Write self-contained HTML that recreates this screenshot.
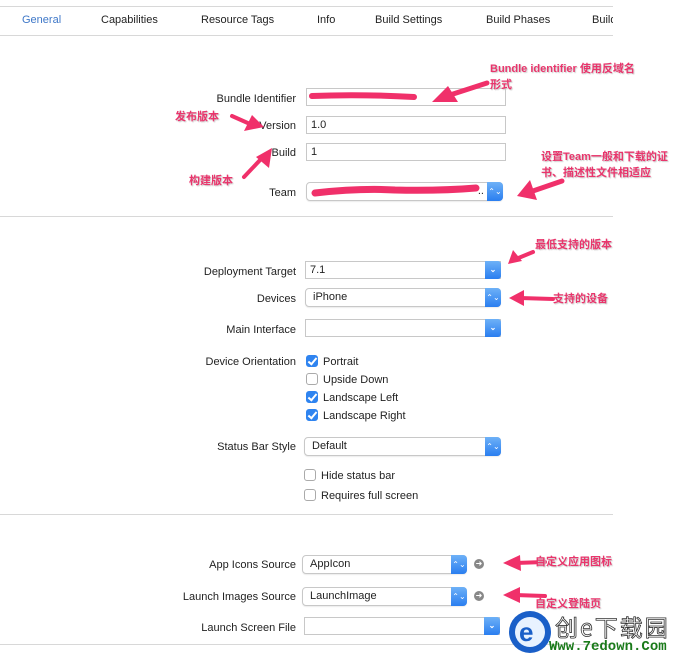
<!DOCTYPE html>
<html><head><meta charset="utf-8"><style>
*{margin:0;padding:0;box-sizing:border-box}
body{width:687px;height:661px;background:#fff;position:relative;overflow:hidden;font-family:"Liberation Sans","Noto Sans CJK SC",sans-serif;font-size:11px;color:#222}
.a{position:absolute;white-space:nowrap}
.hl{position:absolute;left:0;width:613px;height:1px;background:#d8d8d8}
.lb{position:absolute;right:391px;white-space:nowrap;text-align:right}
.tf{position:absolute;height:18px;border:1px solid #c8c8c8;background:#fff;padding-left:4px;line-height:16px}
.pp{position:absolute;height:19px;border:1px solid #c8c8c8;border-radius:4px;background:#fff;padding-left:7px;line-height:17px;box-shadow:0 1px 1px rgba(0,0,0,.08)}
.pp b{position:absolute;right:-1px;top:-1px;width:16px;height:19px;background:linear-gradient(#6eb1f7,#2a7ef0);border-radius:0 4px 4px 0;color:#fff;font-size:8px;text-align:center;line-height:19px;font-weight:normal}
.cb{position:absolute;width:12px;height:12px;border:1px solid #aaa;border-radius:3px;background:#fff}
.cb.on{background:#2f84f0;border-color:#2f84f0}
.cb.on:after{content:"";position:absolute;left:3px;top:0px;width:3px;height:7px;border:solid #fff;border-width:0 2px 2px 0;transform:rotate(40deg)}
.pk{position:absolute;color:#e9356c;font-size:11px;white-space:nowrap;font-weight:bold;text-shadow:1px 1px 1px #ccc}
.tab{position:absolute;top:14px}
</style></head><body>
<div class="hl" style="top:6px"></div>
<div class="tab" style="left:22px;color:#3f78c8">General</div>
<div class="tab" style="left:101px">Capabilities</div>
<div class="tab" style="left:201px">Resource Tags</div>
<div class="tab" style="left:317px">Info</div>
<div class="tab" style="left:375px">Build Settings</div>
<div class="tab" style="left:486px">Build Phases</div>
<div class="tab" style="left:592px;width:21px;overflow:hidden">Build</div>
<div class="hl" style="top:35px"></div>

<div class="lb" style="top:93px">Bundle Identifier</div>
<div class="tf" style="left:306px;top:88px;width:200px"></div>
<div class="lb" style="top:120px">Version</div>
<div class="tf" style="left:306px;top:116px;width:200px">1.0</div>
<div class="lb" style="top:147px">Build</div>
<div class="tf" style="left:306px;top:143px;width:200px">1</div>
<div class="lb" style="top:187px">Team</div>
<div class="pp" style="left:306px;top:182px;width:197px"><span style="position:absolute;right:18px">..</span><b>⌃⌄</b></div>
<div class="hl" style="top:216px"></div>

<div class="lb" style="top:266px">Deployment Target</div>
<div class="tf" style="left:305px;top:261px;width:196px">7.1<b style="position:absolute;right:-1px;top:-1px;width:16px;height:18px;background:linear-gradient(#6eb1f7,#2a7ef0);border-radius:0 3px 3px 0;color:#fff;font-size:8px;text-align:center;line-height:18px">⌄</b></div>
<div class="lb" style="top:293px">Devices</div>
<div class="pp" style="left:305px;top:288px;width:196px">iPhone<b>⌃⌄</b></div>
<div class="lb" style="top:324px">Main Interface</div>
<div class="tf" style="left:305px;top:319px;width:196px"><b style="position:absolute;right:-1px;top:-1px;width:16px;height:18px;background:linear-gradient(#6eb1f7,#2a7ef0);border-radius:0 3px 3px 0;color:#fff;font-size:8px;text-align:center;line-height:18px">⌄</b></div>
<div class="lb" style="top:356px">Device Orientation</div>
<div class="cb on" style="left:306px;top:355px"></div><div class="a" style="left:323px;top:356px">Portrait</div>
<div class="cb" style="left:306px;top:373px"></div><div class="a" style="left:323px;top:374px">Upside Down</div>
<div class="cb on" style="left:306px;top:391px"></div><div class="a" style="left:323px;top:392px">Landscape Left</div>
<div class="cb on" style="left:306px;top:409px"></div><div class="a" style="left:323px;top:410px">Landscape Right</div>
<div class="lb" style="top:441px">Status Bar Style</div>
<div class="pp" style="left:304px;top:437px;width:197px">Default<b>⌃⌄</b></div>
<div class="cb" style="left:304px;top:469px"></div><div class="a" style="left:321px;top:470px">Hide status bar</div>
<div class="cb" style="left:304px;top:489px"></div><div class="a" style="left:321px;top:490px">Requires full screen</div>
<div class="hl" style="top:514px"></div>

<div class="lb" style="top:559px">App Icons Source</div>
<div class="pp" style="left:302px;top:555px;width:165px">AppIcon<b>⌃⌄</b></div>
<div class="a" style="left:474px;top:559px;width:10px;height:10px;border-radius:50%;background:#888;color:#fff;font-size:8px;line-height:10px;text-align:center">➜</div>
<div class="lb" style="top:591px">Launch Images Source</div>
<div class="pp" style="left:302px;top:587px;width:165px">LaunchImage<b>⌃⌄</b></div>
<div class="a" style="left:474px;top:591px;width:10px;height:10px;border-radius:50%;background:#888;color:#fff;font-size:8px;line-height:10px;text-align:center">➜</div>
<div class="lb" style="top:622px">Launch Screen File</div>
<div class="tf" style="left:304px;top:617px;width:196px"><b style="position:absolute;right:-1px;top:-1px;width:16px;height:18px;background:linear-gradient(#6eb1f7,#2a7ef0);border-radius:0 3px 3px 0;color:#fff;font-size:8px;text-align:center;line-height:18px">⌄</b></div>
<div class="hl" style="top:644px"></div>

<svg class="a" style="left:0;top:0" width="687" height="661">
<g stroke="#f0306a" stroke-linecap="round" fill="none">
<path d="M312 96 Q360 94 414 97" stroke-width="6"/>
<path d="M315 193 Q360 188 395 190 Q440 191 476 188" stroke-width="7"/>
<path d="M487 83 L450 95" stroke-width="5"/>
<path d="M232 116 L250 124" stroke-width="4"/>
<path d="M244 177 L262 158" stroke-width="4"/>
<path d="M562 181 L530 192" stroke-width="5"/>
<path d="M533 252 L516 259" stroke-width="4"/>
<path d="M553 299 L520 298" stroke-width="4"/>
<path d="M545 562 L515 563" stroke-width="4"/>
<path d="M545 596 L515 595" stroke-width="4"/>
</g>
<g fill="#f0306a">
<polygon points="432,102 448,86 458,102"/>
<polygon points="264,127 244,131 252,115"/>
<polygon points="272,148 269,168 256,157"/>
<polygon points="517,196 530,180 537,200"/>
<polygon points="508,264 513,250 522,261"/>
<polygon points="509,298 524,290 524,306"/>
<polygon points="503,563 520,555 521,571"/>
<polygon points="503,595 520,587 520,603"/>
</g>
<circle cx="530" cy="632" r="21" fill="#1a5fc8"/>
<circle cx="530" cy="632" r="15" fill="#e8f2ff"/>
<text x="519" y="641" font-size="26" font-family="Liberation Sans" font-weight="bold" fill="#1a5fc8">e</text>
</svg>
<div class="pk" style="left:490px;top:60px">Bundle identifier 使用反域名</div>
<div class="pk" style="left:490px;top:76px">形式</div>
<div class="pk" style="left:175px;top:108px">发布版本</div>
<div class="pk" style="left:189px;top:172px">构建版本</div>
<div class="pk" style="left:541px;top:148px">设置Team一般和下载的证</div>
<div class="pk" style="left:541px;top:164px">书、描述性文件相适应</div>
<div class="pk" style="left:535px;top:236px">最低支持的版本</div>
<div class="pk" style="left:553px;top:290px">支持的设备</div>
<div class="pk" style="left:535px;top:553px">自定义应用图标</div>
<div class="pk" style="left:535px;top:595px">自定义登陆页</div>
<div class="a" style="left:555px;top:609px;font-size:23px;color:#fff;-webkit-text-stroke:0.8px #333;font-family:'Noto Sans CJK SC',sans-serif;letter-spacing:2px">创e下载园</div>
<div class="a" style="left:549px;top:639px;font-size:14px;font-weight:bold;color:#1a7a1a;font-family:'Liberation Mono',monospace">Www.7edown.Com</div>
</body></html>
